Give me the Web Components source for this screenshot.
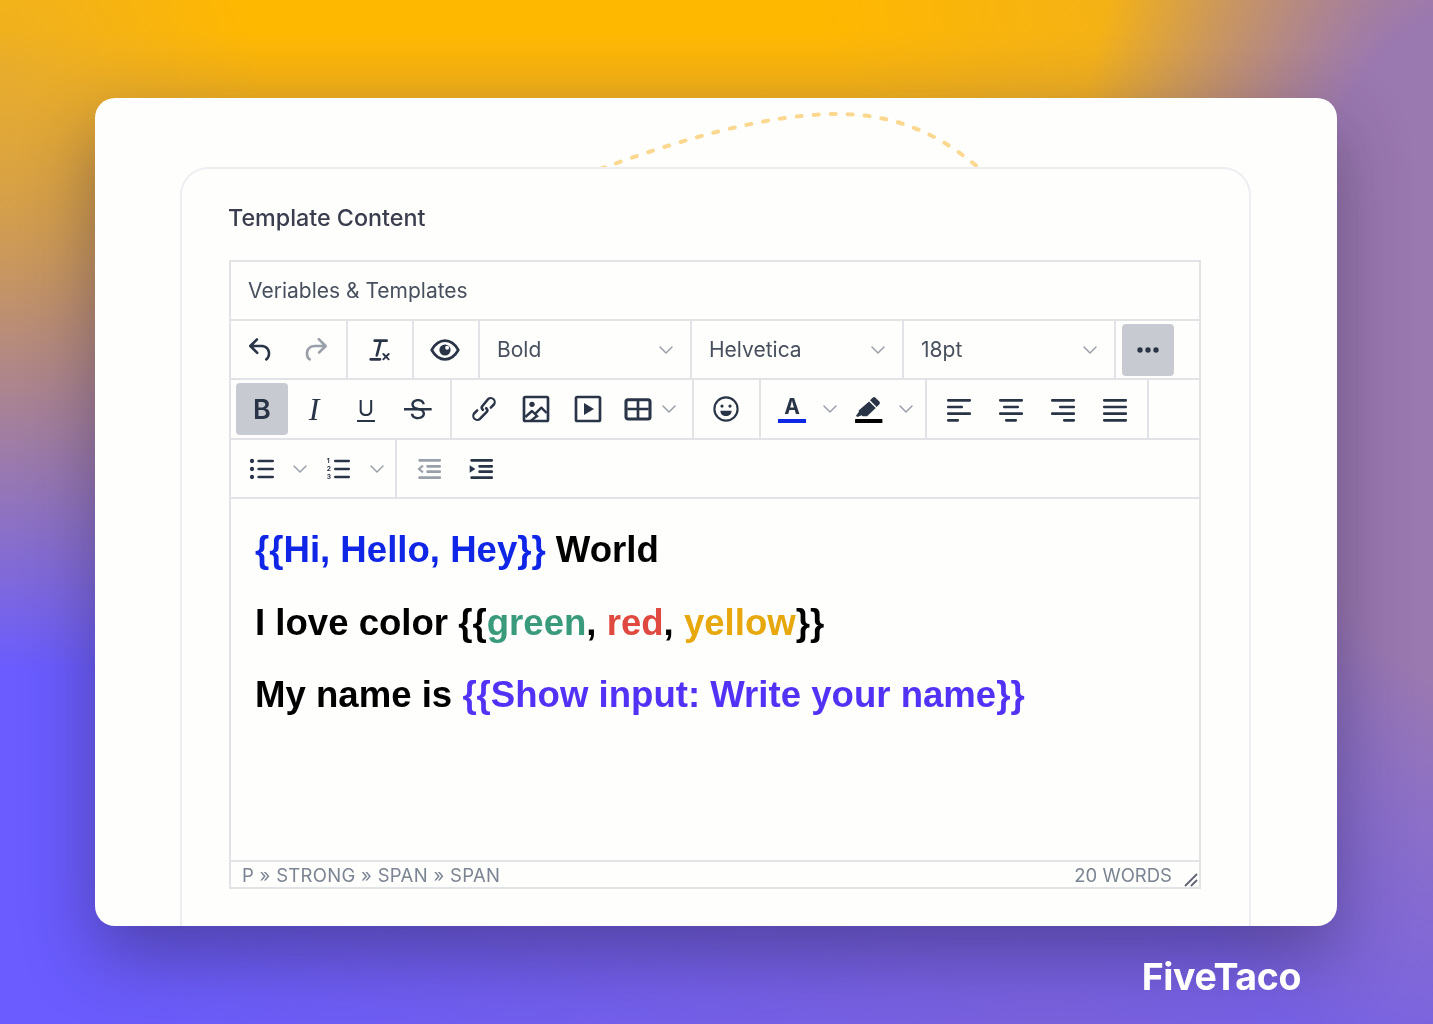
<!DOCTYPE html>
<html lang="en">
<head>
<meta charset="utf-8">
<title>Template Content</title>
<style>
  html, body { margin: 0; height: 100%; }
  body { overflow: hidden; }
  .blue { color: #1026e6; }
  .green { color: #3a9b7c; }
  .red { color: #e0493f; }
  .yellow { color: #e6a80c; }
  .purple { color: #5233f6; }
</style>
</head>
<body>

<promo-page>
  <promo-card>
    <template-panel title="Template Content">
      <rich-editor heading="Veriables &amp; Templates" path="P » STRONG » SPAN » SPAN" words="20 WORDS">
        <tool-row slot="toolbar">
          <tool-group style="padding:0 5px 0 4px;gap:2px">
            <tool-btn><tool-icon name="undo"></tool-icon></tool-btn>
            <tool-btn><tool-icon name="redo" class="off"></tool-icon></tool-btn>
          </tool-group>
          <tool-group><tool-btn><tool-icon name="clear"></tool-icon></tool-btn></tool-group>
          <tool-group style="padding:0 7px 0 5px"><tool-btn><tool-icon name="eye"></tool-icon></tool-btn></tool-group>
          <tool-select>Bold</tool-select>
          <tool-select>Helvetica</tool-select>
          <tool-select>18pt</tool-select>
          <tool-btn active style="margin-left:6px;align-self:center"><tool-icon name="more"></tool-icon></tool-btn>
        </tool-row>
        <tool-row slot="toolbar">
          <tool-group style="padding:0 6px 0 5px">
            <tool-btn active><span style="font:600 27px Inter,sans-serif">B</span></tool-btn>
            <tool-btn><span style="font:italic 400 32px 'Liberation Serif',serif">I</span></tool-btn>
            <tool-btn><span style="font:400 22px/20px Inter,sans-serif;border-bottom:2.5px solid;padding:0 1px 2px;margin-top:1px">U</span></tool-btn>
            <tool-btn><span style="font:400 27px Inter,sans-serif;padding:0 5px;background:linear-gradient(currentColor,currentColor) center/100% 2.5px no-repeat">S</span></tool-btn>
          </tool-group>
          <tool-group style="padding:0 16px 0 6px">
            <tool-btn><tool-icon name="link"></tool-icon></tool-btn>
            <tool-btn><tool-icon name="image"></tool-icon></tool-btn>
            <tool-btn><tool-icon name="media"></tool-icon></tool-btn>
            <tool-btn width="48"><tool-icon name="table"></tool-icon></tool-btn>
            <tool-btn width="14"><tool-icon name="chevron" class="off small"></tool-icon></tool-btn>
          </tool-group>
          <tool-group style="padding:0 7px 0 6px"><tool-btn><tool-icon name="emoji"></tool-icon></tool-btn></tool-group>
          <tool-group>
            <tool-btn width="50"><span style="font:700 21px/21px Inter,sans-serif;box-shadow:0 4px 0 0 #1026e6;padding:0 6px 2px;margin-top:-4px">A</span></tool-btn>
            <tool-btn width="26"><tool-icon name="chevron" class="off small"></tool-icon></tool-btn>
            <tool-btn width="50"><tool-icon name="marker"></tool-icon></tool-btn>
            <tool-btn width="26"><tool-icon name="chevron" class="off small"></tool-icon></tool-btn>
          </tool-group>
          <tool-group>
            <tool-btn><tool-icon name="left"></tool-icon></tool-btn>
            <tool-btn><tool-icon name="center"></tool-icon></tool-btn>
            <tool-btn><tool-icon name="right"></tool-icon></tool-btn>
            <tool-btn><tool-icon name="justify"></tool-icon></tool-btn>
          </tool-group>
        </tool-row>
        <tool-row slot="toolbar">
          <tool-group style="padding:0 5px 0 5px">
            <tool-btn><tool-icon name="bullets"></tool-icon></tool-btn>
            <tool-btn width="24"><tool-icon name="chevron" class="off small"></tool-icon></tool-btn>
            <tool-btn><tool-icon name="numbers"></tool-icon></tool-btn>
            <tool-btn width="26"><tool-icon name="chevron" class="off small"></tool-icon></tool-btn>
          </tool-group>
          <tool-group class="last">
            <tool-btn><tool-icon name="outdent" class="off"></tool-icon></tool-btn>
            <tool-btn><tool-icon name="indent"></tool-icon></tool-btn>
          </tool-group>
        </tool-row>

        <p><span class="blue">{{Hi, Hello, Hey}}</span> World</p>
        <p>I love color {{<span class="green">green</span>, <span class="red">red</span>, <span class="yellow">yellow</span>}}</p>
        <p>My name is <span class="purple">{{Show input: Write your name}}</span></p>
      </rich-editor>
    </template-panel>
  </promo-card>
  <brand-mark>FiveTaco</brand-mark>
</promo-page>

<script>
  const ICONS = {
    undo: '<path fill="currentColor" d="M6.4 8H12c3.7 0 6.2 2 6.8 5.1.6 2.7-.4 5.6-2.3 6.8a1 1 0 0 1-1-1.8c1.1-.6 1.8-2.7 1.4-4.6-.5-2.1-2.1-3.5-4.9-3.5H6.4l3.3 3.3a1 1 0 1 1-1.4 1.4l-5-5a1 1 0 0 1 0-1.4l5-5a1 1 0 0 1 1.4 1.4L6.4 8Z"/>',
    redo: '<path fill="currentColor" d="M17.6 10H12c-2.8 0-4.4 1.4-4.9 3.5-.4 2 .3 4 1.4 4.6a1 1 0 1 1-1 1.8c-2-1.2-2.9-4.1-2.3-6.8.6-3 3-5.1 6.8-5.1h5.6l-3.3-3.3a1 1 0 1 1 1.4-1.4l5 5a1 1 0 0 1 0 1.4l-5 5a1 1 0 0 1-1.4-1.4l3.3-3.3Z"/>',
    clear: '<path fill="currentColor" d="M13.2 6a1 1 0 0 1 0 .2l-2.6 10a1 1 0 0 1-1 .8h-.2a.8.8 0 0 1-.8-1l2.6-10H8a1 1 0 1 1 0-2h9a1 1 0 0 1 0 2h-3.8ZM5 18h7a1 1 0 0 1 0 2H5a1 1 0 0 1 0-2Zm13 1.5L16.5 18 15 19.5a.7.7 0 0 1-1-1l1.5-1.5-1.5-1.5a.7.7 0 0 1 1-1l1.5 1.5 1.5-1.5a.7.7 0 0 1 1 1L17.5 17l1.5 1.5a.7.7 0 0 1-1 1Z"/>',
    eye: '<path fill="none" stroke="currentColor" stroke-width="2" stroke-linejoin="round" d="M2 12c2.6-4.600 6-7 10-7s7.400 2.400 10 7c-2.600 4.600-6 7-10 7s-7.400-2.400-10-7Z"/><circle cx="12" cy="12" r="4.200" fill="currentColor"/><circle cx="13.600" cy="10.400" r="1.500" fill="#fff"/>',
    more: '<g fill="currentColor"><circle cx="6" cy="12" r="2"/><circle cx="12" cy="12" r="2"/><circle cx="18" cy="12" r="2"/></g>',
    chevron: '<path fill="none" stroke="currentColor" stroke-width="2" stroke-linecap="round" stroke-linejoin="round" d="M4 8l8 8 8-8"/>',
    link: '<path fill="currentColor" d="M6.2 12.3a1 1 0 0 1 1.4 1.4l-2 2a2 2 0 1 0 2.800 2.800l4.800-4.800a1 1 0 0 0 0-1.400 1 1 0 1 1 1.400-1.300 2.900 2.900 0 0 1 0 4L9.600 20a3.900 3.900 0 0 1-5.500-5.500l2-2Zm11.600-.6a1 1 0 0 1-1.400-1.400l2-2a2 2 0 1 0-2.800-2.800L11.600 10.300a1 1 0 0 0 0 1.400A1 1 0 1 1 10.200 13a2.900 2.900 0 0 1 0-4L14.400 4a3.900 3.900 0 0 1 5.500 5.500l-2 2Z"/>',
    image: '<rect x="3" y="3" width="18" height="18" rx="1" fill="none" stroke="currentColor" stroke-width="2"/><circle cx="9" cy="8.500" r="2" fill="currentColor"/><path fill="none" stroke="currentColor" stroke-width="1.800" stroke-linejoin="round" d="M4 18l5-4.500 4.500 4.500M11.500 15.500l4.500-4.500 4 4M8 21l5-4"/>',
    media: '<rect x="3" y="3" width="18" height="18" rx="1" fill="none" stroke="currentColor" stroke-width="2"/><path fill="currentColor" d="M9 7.500v9l7.500-4.500Z"/>',
    table: '<rect x="3" y="5" width="18" height="14.500" rx="1.500" fill="none" stroke="currentColor" stroke-width="2.300"/><path stroke="currentColor" stroke-width="2" d="M4 12h16M12 5v14"/>',
    emoji: '<circle cx="12" cy="12" r="8.700" fill="none" stroke="currentColor" stroke-width="1.600"/><circle cx="9" cy="9.800" r="1.200" fill="currentColor"/><circle cx="15" cy="9.800" r="1.200" fill="currentColor"/><path fill="currentColor" d="M7.800 13.300h8.400c0 2.500-1.800 4-4.200 4s-4.200-1.500-4.200-4Z"/>',
    marker: '<path fill="currentColor" d="M15.500 3.500a1.500 1.500 0 0 1 2.100 0l2.900 2.900a1.500 1.500 0 0 1 0 2.100L18.500 10.500 13.500 5.500Z"/><path fill="currentColor" d="M12.800 6.300l5 5-6.500 6.200H8l-.8-.8L4 18l-1-1 2.200-3 -.2-.8Z"/><rect x="2.300" y="19.500" width="20.500" height="3" rx=".4" fill="#000"/>',
    left: lines([[3, 18], [3, 12], [3, 18], [3, 9]]),
    center: lines([[3, 18], [6, 12], [3, 18], [7.5, 9]]),
    right: lines([[3, 18], [9, 12], [3, 18], [12, 9]]),
    justify: lines([[3, 18], [3, 18], [3, 18], [3, 18]]),
    bullets: '<g fill="currentColor"><circle cx="4.500" cy="6" r="1.600"/><circle cx="4.500" cy="12" r="1.600"/><circle cx="4.500" cy="18" r="1.600"/><rect x="8.500" y="5" width="12.500" height="2" rx="1"/><rect x="8.500" y="11" width="12.500" height="2" rx="1"/><rect x="8.500" y="17" width="12.500" height="2" rx="1"/></g>',
    numbers: '<g fill="currentColor"><rect x="9" y="5" width="12" height="2" rx="1"/><rect x="9" y="11" width="12" height="2" rx="1"/><rect x="9" y="17" width="12" height="2" rx="1"/><text x="3.500" y="7.800" font-size="5" font-weight="700" font-family="Inter, sans-serif">1</text><text x="3.500" y="13.800" font-size="5" font-weight="700" font-family="Inter, sans-serif">2</text><text x="3.500" y="19.800" font-size="5" font-weight="700" font-family="Inter, sans-serif">3</text></g>',
    outdent: '<g fill="currentColor"><rect x="4" y="4.500" width="17" height="2" rx=".8"/><rect x="10" y="9" width="11" height="2" rx=".8"/><rect x="10" y="13" width="11" height="2" rx=".8"/><rect x="4" y="17.500" width="17" height="2" rx=".8"/></g><path fill="none" stroke="currentColor" stroke-width="1.600" d="M7.500 9.500L4.500 12l3 2.500"/>',
    indent: '<g fill="currentColor"><rect x="4" y="4.500" width="17" height="2" rx=".8"/><rect x="10" y="9" width="11" height="2" rx=".8"/><rect x="10" y="13" width="11" height="2" rx=".8"/><rect x="4" y="17.500" width="17" height="2" rx=".8"/><path d="M3.500 9.200l4.300 2.800-4.300 2.800Z"/></g>'
  };

  function lines(rows) {
    return '<g fill="currentColor">' + rows.map(([x, w], i) =>
      `<rect x="${x}" y="${4.5 + i * 5}" width="${w}" height="2" rx=".8"/>`).join('') + '</g>';
  }

  class PromoPage extends HTMLElement {
    constructor() {
      super();
      this.attachShadow({mode: 'open'}).innerHTML = `
        <style>
          :host {
            display: flex;
            flex-direction: column;
            box-sizing: border-box;
            height: 1024px;
            padding: 98px 96px 0 95px;
            overflow: hidden;
            background:
              radial-gradient(420px 760px at 1480px 350px, #9a78b0 45%, rgba(154,120,176,0) 100%),
              radial-gradient(620px 260px at 1433px 0, rgba(215,160,80,.55), rgba(215,160,80,0) 100%),
              radial-gradient(1000px 320px at 1050px 1024px, rgba(128,100,210,.75), rgba(128,100,210,0) 100%),
              radial-gradient(260px 260px at 0 70px, rgba(205,160,100,.35), rgba(205,160,100,0) 100%),
              linear-gradient(180deg, #ffb800 30px, #6a5cff 670px);
          }
        </style>
        <slot></slot>`;
    }
  }

  class PromoCard extends HTMLElement {
    constructor() {
      super();
      this.attachShadow({mode: 'open'}).innerHTML = `
        <style>
          :host {
            display: block;
            position: relative;
            box-sizing: border-box;
            height: 828px;
            padding: 69px 86px 0 85px;
            background: #fefefd;
            border-radius: 20px;
            overflow: hidden;
            box-shadow: 0 30px 70px rgba(40,30,60,.42);
          }
          svg { position: absolute; left: 500px; top: 0; filter: blur(.5px); }
        </style>
        <svg width="400" height="70" viewBox="0 0 400 70" aria-hidden="true">
          <path d="M5 71C85 42 170 16 243 16 300 16 345 36 385 71" fill="none" stroke="#fbd78f" stroke-width="4" stroke-linecap="round" stroke-dasharray="5 12"/>
        </svg>
        <slot></slot>`;
    }
  }

  class BrandMark extends HTMLElement {
    constructor() {
      super();
      this.attachShadow({mode: 'open'}).innerHTML = `
        <style>
          :host {
            display: block;
            align-self: flex-end;
            margin: 27px 36px 0 0;
            color: #fff;
            font: 700 37.500px/48px Inter, sans-serif;
            letter-spacing: -.4px;
            filter: blur(.3px);
          }
        </style>
        <slot></slot>`;
    }
  }

  class TemplatePanel extends HTMLElement {
    constructor() {
      super();
      this.attachShadow({mode: 'open'}).innerHTML = `
        <style>
          :host {
            display: block;
            position: relative;
            box-sizing: border-box;
            height: 100%;
            padding: 33px 48px 0 47px;
            background: #fefefd;
            border: 2px solid #eeeef2;
            border-bottom: 0;
            border-radius: 28px 28px 0 0;
            filter: blur(.5px);
          }
          h2 {
            margin: 0 0 26px -1px;
            color: #3a3d4d;
            font: 500 23.300px/32px Inter, sans-serif;
          }
        </style>
        <h2>${this.getAttribute('title')}</h2>
        <slot></slot>`;
      this.removeAttribute('title');
    }
  }

  class RichEditor extends HTMLElement {
    constructor() {
      super();
      this.attachShadow({mode: 'open'}).innerHTML = `
        <style>
          :host {
            display: flex;
            flex-direction: column;
            box-sizing: border-box;
            height: 629px;
            border: 2px solid #e2e3e7;
            font-family: Inter, sans-serif;
          }
          .heading {
            box-sizing: border-box;
            height: 57px;
            padding: 0 17px;
            color: #48505e;
            font-size: 21px;
            line-height: 57px;
          }
          .content {
            flex: 1;
            padding: 15px 24px 0;
            color: #000;
            font: 700 36.600px/72.500px "Liberation Sans", sans-serif;
          }
          ::slotted(p) { margin: 0; }
          .status {
            display: flex;
            justify-content: space-between;
            box-sizing: border-box;
            height: 27px;
            padding: 0 27px 0 11px;
            position: relative;
            border-top: 2px solid #e2e3e7;
            color: #7b8492;
            font-size: 18.500px;
            line-height: 26px;
          }
          .status span:first-child { letter-spacing: .3px; }
          svg { position: absolute; right: 0; bottom: 0; }
        </style>
        <div class="heading">${this.getAttribute('heading')}</div>
        <slot name="toolbar"></slot>
        <div class="content"><slot></slot></div>
        <div class="status">
          <span>${this.getAttribute('path')}</span>
          <span>${this.getAttribute('words')}</span>
          <svg width="16" height="16" viewBox="0 0 16 16" aria-hidden="true">
            <path d="M2 15L14 3M8 15l6-6" stroke="#5f6672" stroke-width="1.800" fill="none"/>
          </svg>
        </div>`;
    }
  }

  class ToolRow extends HTMLElement {
    constructor() {
      super();
      this.attachShadow({mode: 'open'}).innerHTML = `
        <style>
          :host {
            display: flex;
            align-items: stretch;
            box-sizing: border-box;
            height: 60px;
            border-top: 2px solid #e2e3e7;
          }
          :host(:first-of-type) { height: 59px; }
          :host(:last-of-type) { border-bottom: 2px solid #e2e3e7; height: 61px; }
        </style>
        <slot></slot>`;
    }
  }

  class ToolGroup extends HTMLElement {
    constructor() {
      super();
      this.attachShadow({mode: 'open'}).innerHTML = `
        <style>
          :host {
            display: flex;
            align-items: center;
            padding: 0 6px;
            border-right: 2px solid #e2e3e7;
          }
          :host(.last) { border-right: 0; }
        </style>
        <slot></slot>`;
    }
  }

  class ToolBtn extends HTMLElement {
    constructor() {
      super();
      const width = this.getAttribute('width') || 52;
      this.attachShadow({mode: 'open'}).innerHTML = `
        <style>
          :host {
            display: flex;
            align-items: center;
            justify-content: center;
            flex: none;
            width: ${width}px;
            height: 52px;
            border-radius: 4px;
            color: #2a3447;
          }
          :host([active]) { background: #c8cad1; }
        </style>
        <slot></slot>`;
    }
  }

  class ToolIcon extends HTMLElement {
    constructor() {
      super();
      const markup = ICONS[this.getAttribute('name')];
      this.attachShadow({mode: 'open'}).innerHTML = `
        <style>
          :host { display: block; flex: none; width: 32px; height: 32px; }
          :host(.off) { color: #9aa0a9; }
          :host(.small) { width: 18px; height: 18px; }
          svg { display: block; width: 100%; height: 100%; }
        </style>
        <svg viewBox="0 0 24 24" aria-hidden="true">${markup}</svg>`;
    }
  }

  class ToolSelect extends HTMLElement {
    constructor() {
      super();
      this.attachShadow({mode: 'open'}).innerHTML = `
        <style>
          :host {
            display: flex;
            align-items: center;
            justify-content: space-between;
            box-sizing: border-box;
            flex: none;
            width: 212px;
            padding: 0 15px 0 17px;
            border-right: 2px solid #e2e3e7;
            color: #48505e;
            font: 400 21px Inter, sans-serif;
          }
        </style>
        <slot></slot>
        <tool-icon name="chevron" class="off small"></tool-icon>`;
    }
  }

  customElements.define('promo-page', PromoPage);
  customElements.define('promo-card', PromoCard);
  customElements.define('brand-mark', BrandMark);
  customElements.define('template-panel', TemplatePanel);
  customElements.define('rich-editor', RichEditor);
  customElements.define('tool-row', ToolRow);
  customElements.define('tool-group', ToolGroup);
  customElements.define('tool-btn', ToolBtn);
  customElements.define('tool-icon', ToolIcon);
  customElements.define('tool-select', ToolSelect);
</script>
</body>
</html>
